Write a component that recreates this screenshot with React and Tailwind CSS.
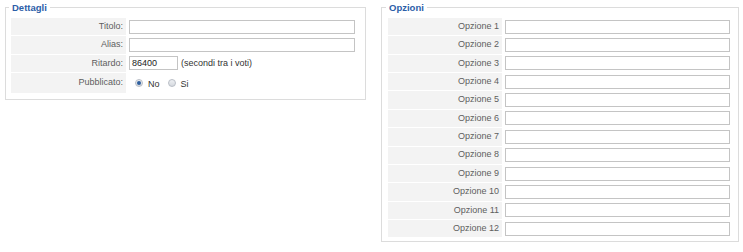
const font = { fontFamily: '"Liberation Sans", Arial, sans-serif' };

function Row({ label, labelWidth, children, tall = false }) {
  return (
    <div className={['flex gap-[3px]', tall ? 'h-[20px]' : 'h-[17.36px]'].join(' ')}>
      <div
        className="flex shrink-0 items-center justify-end bg-[#f3f3f3] pr-[3px] text-[9px] text-[#5e5e5e]"
        style={{ width: labelWidth }}
      >
        {label}
      </div>
      <div className="flex flex-1 items-center">{children}</div>
    </div>
  );
}

function TextInput({ className = 'w-full', value = '' }) {
  return (
    <div
      className={[
        'h-[14px] border border-[#c4c4c4] bg-white px-[2px] text-[9px] leading-[12px] text-[#222]',
        className,
      ].join(' ')}
    >
      {value}
    </div>
  );
}

function Radio({ checked }) {
  return (
    <span className="flex h-[8px] w-[8px] items-center justify-center rounded-full border border-[#b9bec6] bg-gradient-to-b from-[#eef0f3] to-[#d5d9df]">
      {checked && <span className="h-[4px] w-[4px] rounded-full bg-[#2f5f9e]" />}
    </span>
  );
}

function Fieldset({ title, className, children }) {
  return (
    <fieldset className={['border border-[#dcdcdc] px-[5px]', className].join(' ')}>
      <legend className="ml-[-2px] px-[3px] text-[9.5px] font-bold leading-[13px] text-[#2c5ea8]">
        {title}
      </legend>
      <div className="flex flex-col gap-px pt-[4px]">{children}</div>
    </fieldset>
  );
}

export default function App() {
  const options = Array.from({ length: 12 }, (_, i) => `Opzione ${i + 1}`);

  return (
    <div className="flex h-[252px] w-[743px] items-start bg-white pt-px" style={font}>
      <Fieldset title="Dettagli" className="ml-[5px] w-[361px] pb-[6px] pr-[10px]">
        <Row label="Titolo:" labelWidth={115}>
          <TextInput />
        </Row>
        <Row label="Alias:" labelWidth={115}>
          <TextInput />
        </Row>
        <Row label="Ritardo:" labelWidth={115}>
          <TextInput className="w-[49px]" value="86400" />
          <span className="ml-[3px] text-[9px] text-[#333]">(secondi tra i voti)</span>
        </Row>
        <Row label="Pubblicato:" labelWidth={115} tall>
          <div className="ml-[6px] flex items-center text-[9px] text-[#333]">
            <Radio checked />
            <span className="ml-[5px] mt-[3px]">No</span>
            <span className="ml-[8px]">
              <Radio />
            </span>
            <span className="ml-[5px] mt-[3px]">Si</span>
          </div>
        </Row>
      </Fieldset>

      <Fieldset title="Opzioni" className="ml-[15px] w-[358px] pb-[4px] pl-[6px] pr-[8px]">
        {options.map((o) => (
          <Row key={o} label={o} labelWidth={114}>
            <TextInput />
          </Row>
        ))}
      </Fieldset>
    </div>
  );
}
